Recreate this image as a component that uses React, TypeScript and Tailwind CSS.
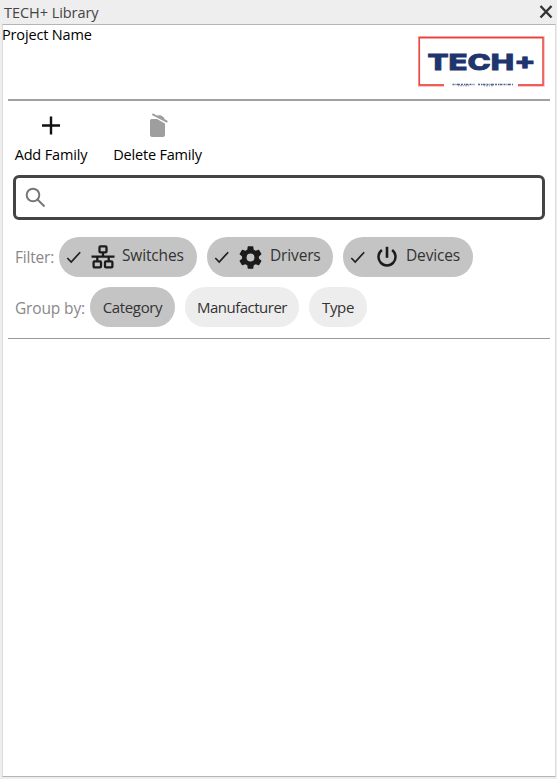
import React from "react";

function CheckIcon() {
  return (
    <svg className="h-4 w-4 shrink-0" viewBox="0 0 16 16" fill="none" stroke="#202020" strokeWidth="1.7">
      <path d="M1.3 9 5.2 13 14.2 3.2" />
    </svg>
  );
}

function NetworkIcon() {
  return (
    <svg className="h-6 w-6 shrink-0" viewBox="0 0 24 24" fill="none" stroke="#1b1b1b" strokeWidth="2.3">
      <rect x="8.5" y="1.4" width="7" height="6" rx="1" />
      <rect x="2.6" y="16.4" width="7.4" height="6" rx="1" />
      <rect x="14" y="16.4" width="7.4" height="6" rx="1" />
      <path d="M12 7v4.500M.5 11.600h23M6.300 12v4.500M17.700 12v4.500" />
    </svg>
  );
}

function GearIcon() {
  return (
    <svg className="h-[27px] w-[27px] shrink-0" viewBox="0 0 24 24" fill="#1b1b1b">
      <path d="M12 15.5A3.5 3.5 0 0 1 8.5 12 3.5 3.5 0 0 1 12 8.500a3.500 3.500 0 0 1 3.500 3.500 3.500 3.500 0 0 1-3.500 3.500m7.430-2.530c.04-.32.07-.64.07-.97s-.03-.66-.07-1l2.110-1.630c.19-.15.24-.42.12-.64l-2-3.460c-.12-.22-.39-.31-.61-.22l-2.490 1c-.52-.39-1.060-.73-1.690-.98l-.37-2.650A.506.506 0 0 0 14 2h-4c-.25 0-.46.18-.5.42l-.37 2.650c-.63.25-1.170.59-1.690.98l-2.490-1c-.22-.09-.49 0-.61.22l-2 3.460c-.13.22-.07.49.12.64L4.570 11c-.04.34-.07.67-.07 1s.03.65.07.97l-2.110 1.660c-.19.15-.25.42-.12.64l2 3.460c.12.22.39.3.61.22l2.490-1.010c.52.4 1.060.74 1.690.99l.37 2.650c.04.24.25.42.5.42h4c.25 0 .46-.18.5-.42l.37-2.650c.63-.26 1.170-.59 1.690-.99l2.490 1.010c.22.08.49 0 .61-.22l2-3.460c.12-.22.07-.49-.12-.64z" />
    </svg>
  );
}

function PowerIcon() {
  return (
    <svg className="h-6 w-6 shrink-0" viewBox="0 0 24 24" fill="none" stroke="#1b1b1b">
      <path strokeWidth="2.6" d="M12 1.800v11" />
      <path strokeWidth="2.5" d="M6.900 5.100a8.500 8.500 0 1 0 10.200 0" />
    </svg>
  );
}

function Logo() {
  return (
    <svg className="absolute left-[415px] top-[10px] h-[56px] w-[132px]" viewBox="418 35 132 56">
      <path d="M444 85.500H419V37.500H543.500V85.500H518" fill="none" stroke="#f4b5b2" strokeWidth="2.400" />
      <path d="M444 85H419.300V37.500H543V85H518" fill="none" stroke="#ea4039" strokeWidth="1.300" />
      <text x="427.500" y="69.500" textLength="108" lengthAdjust="spacingAndGlyphs" fontSize="22" fontWeight="800" fill="#1e356e" stroke="#1e356e" strokeWidth=".8" style={{ fontFamily: 'Inter, sans-serif' }}>TECH+</text>
      <path d="M452.500 84.500h22M478 84.500h35" stroke="#52648b" strokeWidth="1.300" strokeDasharray="2 1 1 .5 3 1" />
      <path d="M458 85.800h11M484 85.800h9" stroke="#8b98b1" strokeWidth="1" strokeDasharray="1 1 2 1" />
    </svg>
  );
}

export default function App() {
  return (
    <div className="flex h-[779px] w-[557px] flex-col bg-[#eeeeee] pr-px pl-0.5 font-['Open_Sans','Noto_Sans',sans-serif] text-[14.500px] leading-5 text-black">
      <header className="flex h-6 shrink-0 items-center justify-between pr-[2px] pl-[2px]">
        <span className="mt-0.5 text-[14.500px] tracking-[-0.05px] text-[#444]">TECH+ Library</span>
        <svg className="h-4 w-4" viewBox="0 0 16 16" stroke="#333" strokeWidth="2.400"><path d="M2.500 2 13.500 13.500M13.500 2 2.500 13.500" /></svg>
      </header>
      <main className="relative h-[753px] shrink-0 border border-t-[#b5b5b5] border-r-[#dcdcdc] border-b-[#b5b5b5] border-l-[#dcdcdc] bg-white">
        <div className="-ml-px h-[74px] tracking-[-0.150px]"><span>Project Name</span></div>
        <Logo />
        <div className="mr-[5px] ml-[5px] h-0.5 bg-[#a0a0a0]" />
        <div className="flex h-[74px] pl-[11px] pt-3">
          <button className="flex h-[52px] w-[74px] flex-col items-center">
            <svg className="h-6 w-6" viewBox="0 0 24 24" stroke="#111" strokeWidth="2.400"><path d="M12 3.500v18M3 12.500h18" /></svg>
            <span className="mt-[8px] whitespace-nowrap tracking-[-0.150px]">Add Family</span>
          </button>
          <button className="ml-[25px] flex h-[52px] w-[89px] flex-col items-center">
            <svg className="h-6 w-6" viewBox="0 0 24 24" fill="#9e9e9e"><path d="M4 7.500q0-1.500 1.500-1.500H11l8 4.500V22q0 2-2 2H6q-2 0-2-2z" /><path d="M6.800.3 11 2.500l3.500-.2 3.300 1.900.9 2 3.200 1.900-1 1.700L5.900 2z" /></svg>
            <span className="mt-[8px] whitespace-nowrap tracking-[-0.200px]">Delete Family</span>
          </button>
        </div>
        <div className="mr-[10px] ml-[10px] flex h-[45px] items-center rounded-md border-[3px] border-[#444] pl-2">
          <svg className="h-6 w-6" viewBox="0 0 24 24" fill="none" stroke="#777" strokeWidth="2"><circle cx="9" cy="9" r="6.300" /><path d="m13.500 13.500 7 7" /></svg>
        </div>
        <div className="mt-[17px] flex h-10 items-center pl-3 text-[#888]">
          <span className="w-[44px] whitespace-nowrap text-[15.500px] tracking-[-0.200px]">Filter:</span>
          <div className="flex gap-[10px] text-[15.500px] tracking-[-0.150px] text-[#333]">
            <button className="flex h-10 w-[138px] items-center rounded-full bg-[#c4c4c4] pl-[7px]">
              <CheckIcon /><span className="ml-[9px] flex"><NetworkIcon /></span><span className="mb-[5px] ml-[7px]">Switches</span>
            </button>
            <button className="flex h-10 w-[126px] items-center rounded-full bg-[#c4c4c4] pl-[7px]">
              <CheckIcon /><span className="ml-[7px] flex"><GearIcon /></span><span className="mb-[5px] ml-[6px]">Drivers</span>
            </button>
            <button className="flex h-10 w-[130px] items-center rounded-full bg-[#c4c4c4] pl-[7px]">
              <CheckIcon /><span className="ml-[9px] flex"><PowerIcon /></span><span className="mb-[5px] ml-[7px]">Devices</span>
            </button>
          </div>
        </div>
        <div className="mt-[10px] flex h-10 items-center pl-3 text-[#888]">
          <span className="mt-px w-[75px] whitespace-nowrap text-[15.500px] tracking-[-0.150px]">Group by:</span>
          <div className="flex gap-[10px] text-[15px] tracking-[-0.350px] text-[#333]">
            <button className="h-10 w-[85px] rounded-full bg-[#c4c4c4]">Category</button>
            <button className="h-10 w-[114px] rounded-full bg-[#ededed] tracking-[-0.500px]">Manufacturer</button>
            <button className="h-10 w-[58px] rounded-full bg-[#ededed]">Type</button>
          </div>
        </div>
        <div className="mt-[11px] mr-[5px] ml-[5px] h-px bg-[#999]" />
      </main>
    </div>
  );
}
